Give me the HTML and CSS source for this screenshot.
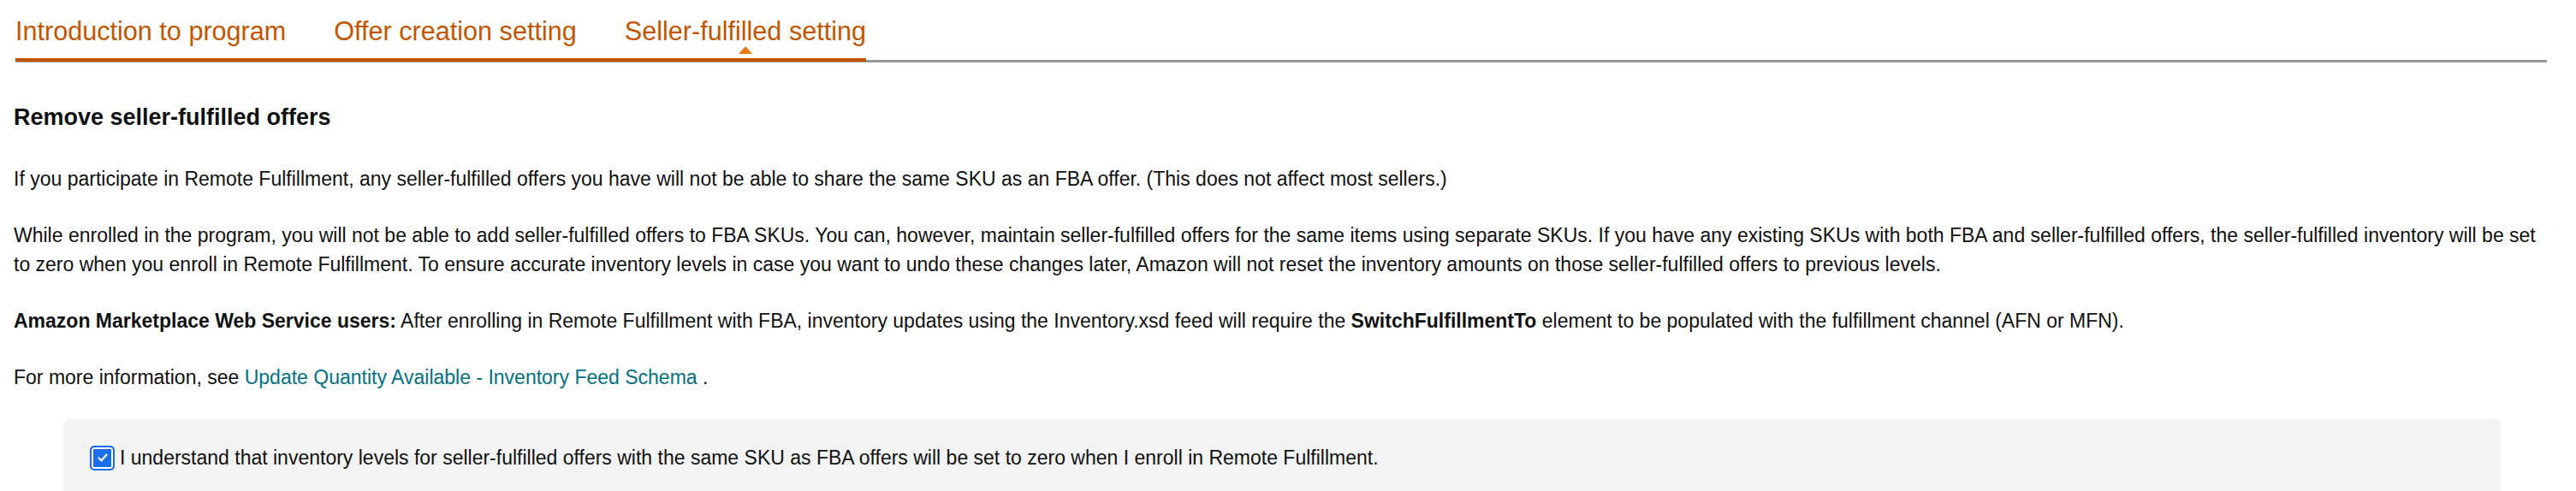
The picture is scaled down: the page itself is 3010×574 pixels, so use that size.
FILE: index.html
```html
<!DOCTYPE html>
<html lang="en">
<head>
    <meta charset="UTF-8">
    <meta name="viewport" content="width=device-width, initial-scale=1.0">
    <title>Seller-fulfilled setting</title>
    <link rel="stylesheet" href="styles.css">
</head>
<body>
    <div class="page">
        <!-- Tabs -->
        <div class="tabs">
            <div class="tab-list">
                <a class="tab">Introduction to program</a>
                <a class="tab">Offer creation setting</a>
                <a class="tab active">Seller-fulfilled setting</a>
            </div>
        </div>

        <!-- Content -->
        <div class="content">
            <h2>Remove seller-fulfilled offers</h2>
            <p>If you participate in Remote Fulfillment, any seller-fulfilled offers you have will not be able to share the same SKU as an FBA offer. (This does not affect most sellers.)</p>
            <p>While enrolled in the program, you will not be able to add seller-fulfilled offers to FBA SKUs. You can, however, maintain seller-fulfilled offers for the same items using separate SKUs. If you have any existing SKUs with both FBA and seller-fulfilled offers, the seller-fulfilled inventory will be set to zero when you enroll in Remote Fulfillment. To ensure accurate inventory levels in case you want to undo these changes later, Amazon will not reset the inventory amounts on those seller-fulfilled offers to previous levels.</p>
            <p><b>Amazon Marketplace Web Service users:</b> After enrolling in Remote Fulfillment with FBA, inventory updates using the Inventory.xsd feed will require the <b>SwitchFulfillmentTo</b> element to be populated with the fulfillment channel (AFN or MFN).</p>
            <p>For more information, see <a class="link" href="#">Update Quantity Available - Inventory Feed Schema</a> .</p>

            <div class="confirm">
                <label class="check-row">
                    <span class="checkbox">
                        <svg viewBox="0 0 16 16" width="16" height="16"><path d="M3.5 8.5 L6.5 11.5 L12.5 4.5" fill="none" stroke="#fff" stroke-width="2.2" stroke-linecap="round" stroke-linejoin="round"/></svg>
                    </span>
                    I understand that inventory levels for seller-fulfilled offers with the same SKU as FBA offers will be set to zero when I enroll in Remote Fulfillment.
                </label>
            </div>
        </div>
    </div>
</body>
</html>
```

FILE: styles.css
```css
* {
    box-sizing: border-box;
}
body {
    margin: 0;
    background-color: white;
    font-family: 'Liberation Sans', Arial, sans-serif;
    color: #0f1111;
}
.page {
    padding: 0 34px 0 16px;
}
.tabs {
    margin-left: 2px;
    border-bottom: 3px solid #999;
}
.tab-list {
    display: inline-flex;
    gap: 56px;
    padding-top: 18px;
    border-bottom: 4px solid #c45500;
    margin-bottom: -2px;
}
.tab {
    position: relative;
    font-size: 30.6px;
    line-height: 36px;
    color: #c45500;
    padding-bottom: 14px;
    cursor: pointer;
}
.tab.active::after {
    content: "";
    position: absolute;
    left: 50%;
    bottom: 5px;
    margin-left: -8px;
    border-left: 8px solid transparent;
    border-right: 8px solid transparent;
    border-bottom: 9px solid #e47911;
}
.content {
    padding-top: 47px;
}
h2 {
    font-size: 27px;
    line-height: 34px;
    margin: 0 0 38px;
}
p {
    font-size: 23px;
    line-height: 34px;
    margin: 0 0 32px;
}
.link {
    color: #007185;
    text-decoration: none;
}
.confirm {
    margin: 19px 54px 0 58px;
    background-color: #f3f3f3;
    border-radius: 8px;
    padding: 28px 31px 40px;
}
.check-row {
    display: flex;
    align-items: center;
    gap: 6px;
    font-size: 23px;
    line-height: 34px;
}
.checkbox {
    display: flex;
    align-items: center;
    justify-content: center;
    width: 29px;
    height: 29px;
    border: 2px solid #1a6ee8;
    border-radius: 5px;
    background-color: #1a6ee8;
    box-shadow: inset 0 0 0 2px #fff;
    padding: 2px;
}
```
